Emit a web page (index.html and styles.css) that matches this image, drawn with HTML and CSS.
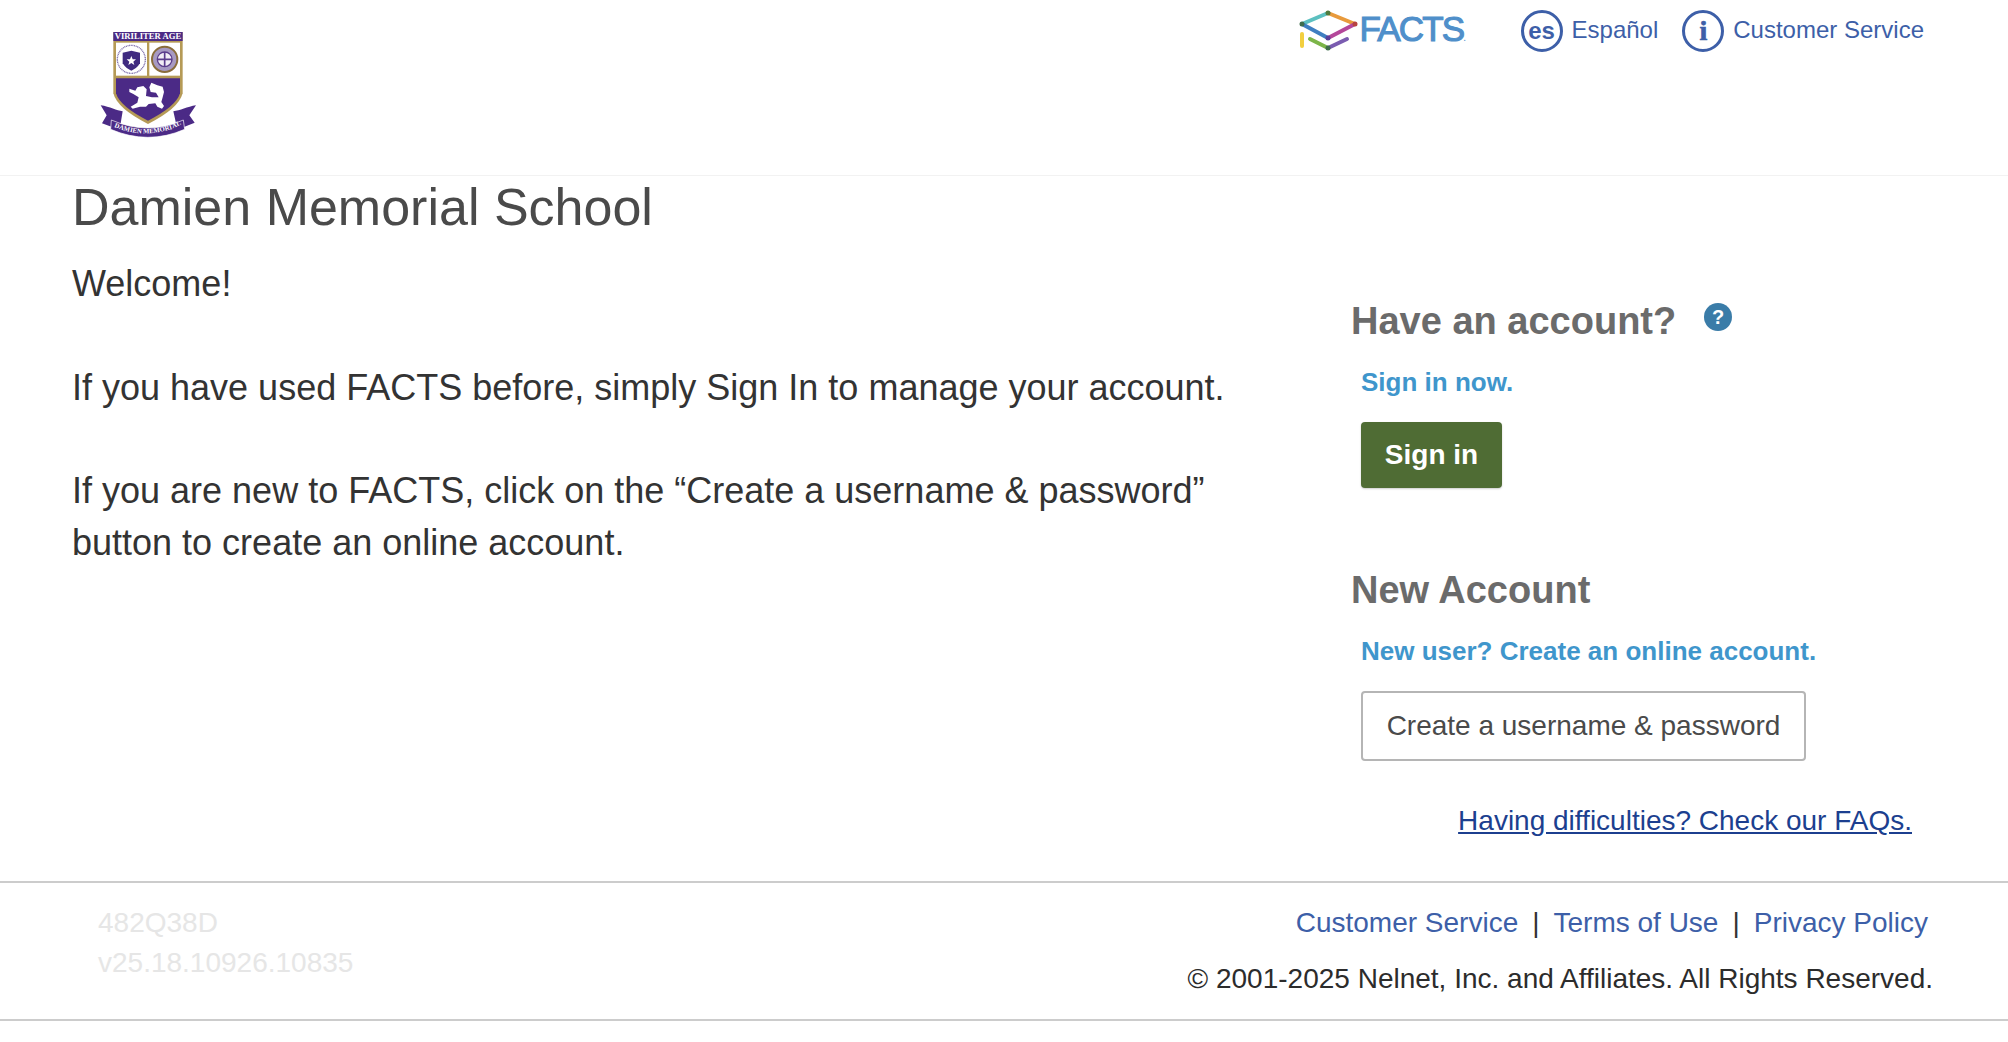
FILE: index.html
```html
<!DOCTYPE html>
<html lang="en">
<head>
<meta charset="utf-8">
<title>Damien Memorial School - FACTS</title>
<link rel="stylesheet" href="styles.css">
</head>
<body>
<header class="top">
  <svg class="crest" viewBox="0 0 420 420" width="140" height="140">
    <path d="M62 286 C90 290 110 302 128 304 L122 340 L98 352 L66 340 L80 316 Z" fill="#4b2a86"/>
    <path d="M348 286 C322 290 300 302 280 304 L288 340 L310 352 L344 338 L328 316 Z" fill="#4b2a86"/>
    <path d="M100 66 H308 V250 Q296 296 204 342 Q112 296 100 250 Z" fill="#b59a56"/>
    <rect x="100" y="66" width="208" height="27" fill="#4b2a86"/>
    <text x="204" y="88" class="crest-motto" text-anchor="middle">VIRILITER AGE</text>
    <rect x="108" y="98" width="93" height="99" fill="#fff"/>
    <rect x="208" y="98" width="92" height="99" fill="#fff"/>
    <path d="M108 205 H300 V250 Q288 290 204 332 Q120 290 108 250 Z" fill="#4b2a86"/>
    <circle cx="154" cy="148" r="42" fill="none" stroke="#7a6aa8" stroke-width="4" stroke-dasharray="3 2"/>
    <path d="M128 128 L154 122 L180 128 V160 Q170 176 154 182 Q138 176 128 160 Z" fill="#3f2a80"/>
    <path d="M154 138 l4 10 h10 l-8 7 3 10 -9 -6 -9 6 3 -10 -8 -7 h10z" fill="#fff"/>
    <circle cx="254" cy="148" r="38" fill="#a79ac2" stroke="#8a6d3b" stroke-width="6"/>
    <circle cx="254" cy="148" r="22" fill="#f2eef6" stroke="#5b3d8c" stroke-width="4"/>
    <path d="M254 126 V170 M232 148 H276" stroke="#5b3d8c" stroke-width="5"/>
    <path d="M148 236 L166 242 L172 232 L190 228 L200 238 L198 258 L216 262 L236 262 L228 248 L212 246 L208 232 L214 218 L232 226 L248 230 L252 246 L248 262 L244 276 L252 288 L246 296 L232 290 L226 280 L206 282 L198 290 L180 290 L158 296 L152 290 L172 278 L176 262 L160 252 L148 246 Z" fill="#fff"/>
    <path d="M94 330 Q204 378 310 330 L314 358 Q204 406 92 358 Z" fill="#4b2a86" stroke="#fff" stroke-width="2"/>
    <text class="crest-name" x="102 116 130 149 157 170 184 189 208 221 240 256 270 278 292" y="351 356 361 365 367 369 370 370 370 368 365 362 359 355 349" rotate="22 19 15 12 10 6 4 1 -3 -7 -11 -15 -18 -21 -24">DAMIEN MEMORIAL</text>
  </svg>
  <nav class="utility">
    <svg class="facts-mark" viewBox="0 -1 60 42" width="60" height="42" fill="none" stroke-width="4" stroke-linecap="round">
      <path d="M3 13 L29 2" stroke="#5cc0c0"/>
      <path d="M29 2 L56 13" stroke="#e89a3c"/>
      <path d="M3 13 L29 27" stroke="#3f7fc1"/>
      <path d="M29 27 L56 13" stroke="#b4479a"/>
      <path d="M3 23 V35" stroke="#f2cf3f"/>
      <path d="M11 28 L29 37" stroke="#7cb548"/>
      <path d="M29 37 L48 28" stroke="#7a5cb0"/>
      <circle cx="3" cy="13" r="2.5" fill="#3f6d4c" stroke="none"/>
      <circle cx="29" cy="2" r="2.5" fill="#4f7a3c" stroke="none"/>
      <circle cx="56" cy="13" r="2.5" fill="#b8433f" stroke="none"/>
      <circle cx="29" cy="27" r="2.5" fill="#5a3f9a" stroke="none"/>
      <circle cx="29" cy="37" r="2.5" fill="#3f6d4c" stroke="none"/>
    </svg>
    <span class="facts-word">FACTS<span class="facts-dot">.</span></span>
    <a class="utility-link spanish" href="#">
      <span class="ring ring-es">es</span>
      <span class="utility-label">Español</span>
    </a>
    <a class="utility-link" href="#">
      <span class="ring ring-info">i</span>
      <span class="utility-label">Customer Service</span>
    </a>
  </nav>
</header>
<main class="content">
  <section class="intro">
    <h1 class="school">Damien Memorial School</h1>
    <p class="copy">Welcome!</p>
    <p class="copy">If you have used FACTS before, simply Sign In to manage your account.</p>
    <p class="copy">If you are new to FACTS, click on the “Create a username &amp; password” button to create an online account.</p>
  </section>
  <aside class="panel">
    <div class="panel-head">
      <h2 class="panel-title">Have an account?</h2>
      <span class="help">?</span>
    </div>
    <a class="lead" href="#">Sign in now.</a>
    <a class="btn btn-primary" href="#">Sign in</a>
    <h2 class="panel-title second">New Account</h2>
    <a class="lead" href="#">New user? Create an online account.</a>
    <a class="btn btn-outline" href="#">Create a username &amp; password</a>
    <a class="faq" href="#">Having difficulties? Check our FAQs.</a>
  </aside>
</main>
<footer class="foot">
  <div class="build">
    <div>482Q38D</div>
    <div>v25.18.10926.10835</div>
  </div>
  <div class="legal">
    <div class="legal-links">
      <a href="#">Customer Service</a><span class="sep">|</span><a href="#">Terms of Use</a><span class="sep">|</span><a href="#">Privacy Policy</a>
    </div>
    <div class="rights">© 2001-2025 Nelnet, Inc. and Affiliates. All Rights Reserved.</div>
  </div>
</footer>
</body>
</html>
```

FILE: styles.css
```css
* { box-sizing: border-box; }
html, body { margin: 0; padding: 0; }
body {
  width: 2008px;
  height: 1042px;
  overflow: hidden;
  background: #fff;
  font-family: "Liberation Sans", Arial, sans-serif;
  color: #333;
}
a { text-decoration: none; }

.top {
  height: 176px;
  border-bottom: 1px solid #f2f2f2;
  display: flex;
  justify-content: space-between;
  align-items: flex-start;
  padding: 10px 84px 0 80px;
}
.crest { display: block; }
.crest-motto { font: bold 26px "Liberation Serif", serif; fill: #fff; }
.crest-name { font: bold 20px "Liberation Serif", serif; fill: #fff; }

.utility {
  display: flex;
  align-items: center;
  height: 42px;
  color: #3d5fa8;
}
.facts-mark { display: block; margin-right: 1px; }
.facts-word {
  padding-top: 4px;
  font-size: 35px;
  line-height: 38px;
  letter-spacing: -1.8px;
  color: #4f8fca;
  -webkit-text-stroke: 1.1px #4f8fca;
  width: 106px;
  white-space: nowrap;
}
.facts-dot { font-size: 10px; letter-spacing: 0; -webkit-text-stroke: 0; }
.utility-link {
  display: flex;
  align-items: center;
  gap: 9px;
  font-size: 24px;
  color: #3d5fa8;
}
.utility-label { padding-bottom: 2px; }
.spanish { margin-left: 55px; margin-right: 24px; }
.ring {
  width: 42px;
  height: 42px;
  border: 3.5px solid #3d5fa8;
  border-radius: 50%;
  display: flex;
  align-items: center;
  justify-content: center;
  font-weight: 700;
}
.ring-es { font-size: 24px; }
.ring-info {
  font-family: "Liberation Serif", serif;
  font-size: 28px;
  -webkit-text-stroke: 0.7px #3d5fa8;
}

.content {
  height: 705px;
  display: flex;
  padding-left: 72px;
}
.intro { width: 1279px; }
.school {
  margin: 0 0 20px;
  font-size: 52px;
  line-height: 62px;
  font-weight: 400;
  color: #4a4a4a;
}
.copy {
  margin: 0 0 51.5px;
  width: 1210px;
  font-size: 36px;
  line-height: 52px;
  color: #333;
}

.panel {
  flex: 1;
  display: flex;
  flex-direction: column;
  align-items: flex-start;
  padding: 122px 96px 0 0;
}
.panel-head { display: flex; align-items: flex-start; gap: 28px; }
.panel-title {
  margin: 0;
  font-size: 38px;
  line-height: 46px;
  font-weight: 700;
  color: #6b6b6b;
}
.second { margin-top: 79px; }
.help {
  width: 28px;
  height: 28px;
  margin-top: 5px;
  border-radius: 50%;
  background: #3a7ca8;
  color: #fff;
  font-size: 20px;
  font-weight: 700;
  display: flex;
  align-items: center;
  justify-content: center;
}
.lead {
  margin: 21px 0 0 10px;
  font-size: 26px;
  line-height: 34px;
  font-weight: 700;
  color: #3f96cc;
}
.btn {
  margin: 23px 0 0 10px;
  display: flex;
  align-items: center;
  justify-content: center;
  border-radius: 4px;
}
.btn-primary {
  width: 141px;
  height: 66px;
  background: #4f6c34;
  color: #fff;
  font-size: 28px;
  font-weight: 700;
  box-shadow: 0 1px 2px rgba(0, 0, 0, 0.2);
}
.btn-outline {
  margin-top: 23px;
  width: 445px;
  height: 70px;
  border: 2px solid #b5b5b5;
  color: #4a4a4a;
  font-size: 28px;
}
.faq {
  align-self: flex-end;
  margin-top: 43px;
  font-size: 28px;
  line-height: 34px;
  color: #1c3f8f;
  text-decoration: underline;
}

.foot {
  height: 140px;
  border-top: 2px solid #ccc;
  border-bottom: 2px solid #ccc;
  display: flex;
  justify-content: space-between;
  padding: 20px 75px 0 98px;
}
.build {
  font-size: 28px;
  line-height: 40px;
  color: #e6e6e6;
}
.legal {
  display: flex;
  flex-direction: column;
  align-items: flex-end;
  font-size: 28px;
  line-height: 40px;
}
.legal-links { margin-right: 5px; }
.legal-links a { color: #3d5fa8; }
.sep { margin: 0 14px; color: #333; }
.rights { margin-top: 16px; color: #2c2c2c; }
```
